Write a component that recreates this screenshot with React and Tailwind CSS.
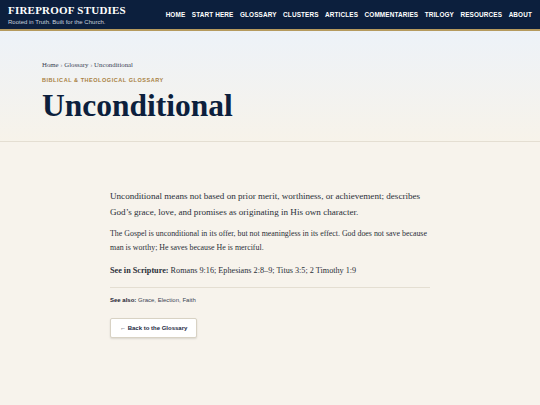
import React from 'react';

const navItems = ['Home', 'Start Here', 'Glossary', 'Clusters', 'Articles', 'Commentaries', 'Trilogy', 'Resources', 'About'];

const serif = "font-['Georgia','Liberation_Serif','DejaVu_Serif',serif]";
const sans = "font-['Liberation_Sans','Arial',sans-serif]";

export default function App() {
  return (
    <div className={`min-h-[405px] bg-[#f7f3ec] ${sans}`}>
      <header className="h-[31px] bg-[#0c1f3d] border-b-2 border-[#b59a5e] flex items-center justify-between pl-[8px] pr-[8px]">
        <div className="flex flex-col">
          <span className={`${serif} text-[11px] font-bold tracking-[0.02em] text-white leading-none`}>FIREPROOF STUDIES</span>
          <span className="text-[6px] text-[#c9d1dd] leading-none mt-[3px]">Rooted in Truth. Built for the Church.</span>
        </div>
        <nav className="flex items-center gap-[6.5px]">
          {navItems.map((item) => (
            <a key={item} className="text-[6.4px] font-bold uppercase text-white tracking-[0.02em]">
              {item}
            </a>
          ))}
        </nav>
      </header>

      <section className="h-[111px] bg-gradient-to-b from-[#edf2f8] to-[#f7f3ea] border-b border-[#e4ded2] px-[42px] pt-[31px]">
        <div className={`${serif} text-[6.8px] text-[#3a4354] leading-none`}>
          Home <span className="text-[#8a8f99]">›</span> Glossary <span className="text-[#8a8f99]">›</span> Unconditional
        </div>
        <div className="mt-[9px] text-[5.5px] font-bold uppercase tracking-[0.1em] text-[#a8803f] leading-none">
          Biblical &amp; Theological Glossary
        </div>
        <h1 className={`${serif} mt-[7px] text-[31.5px] font-bold text-[#0c1f3d] leading-none`}>Unconditional</h1>
      </section>

      <main className="w-[320px] ml-[110px] pt-[46px]">
        <p className={`${serif} text-[9.1px] leading-[16px] text-[#2a2f38]`}>
          Unconditional means not based on prior merit, worthiness, or achievement; describes God’s grace, love, and promises as originating in His own character.
        </p>
        <p className={`${serif} mt-[7px] text-[7.9px] leading-[14px] text-[#2a2f38]`}>
          The Gospel is unconditional in its offer, but not meaningless in its effect. God does not save because man is worthy; He saves because He is merciful.
        </p>
        <p className={`${serif} mt-[9px] text-[8.2px] leading-[14px] text-[#2a2f38]`}>
          <strong className="font-bold">See in Scripture:</strong> Romans 9:16; Ephesians 2:8–9; Titus 3:5; 2 Timothy 1:9
        </p>
        <div className="mt-[9px] border-t border-[#e4ded2]" />
        <p className="mt-[8px] text-[6px] text-[#3a4354]">
          <strong className="font-bold text-[#1c2433]">See also:</strong> Grace, Election, Faith
        </p>
        <button className="mt-[13px] h-[20px] px-[9px] bg-white border border-[#d8d2c4] rounded-[2px] shadow-[0_1px_2px_rgba(0,0,0,0.12)] text-[6px] font-bold text-[#1c2a44]">
          ← Back to the Glossary
        </button>
      </main>
    </div>
  );
}
